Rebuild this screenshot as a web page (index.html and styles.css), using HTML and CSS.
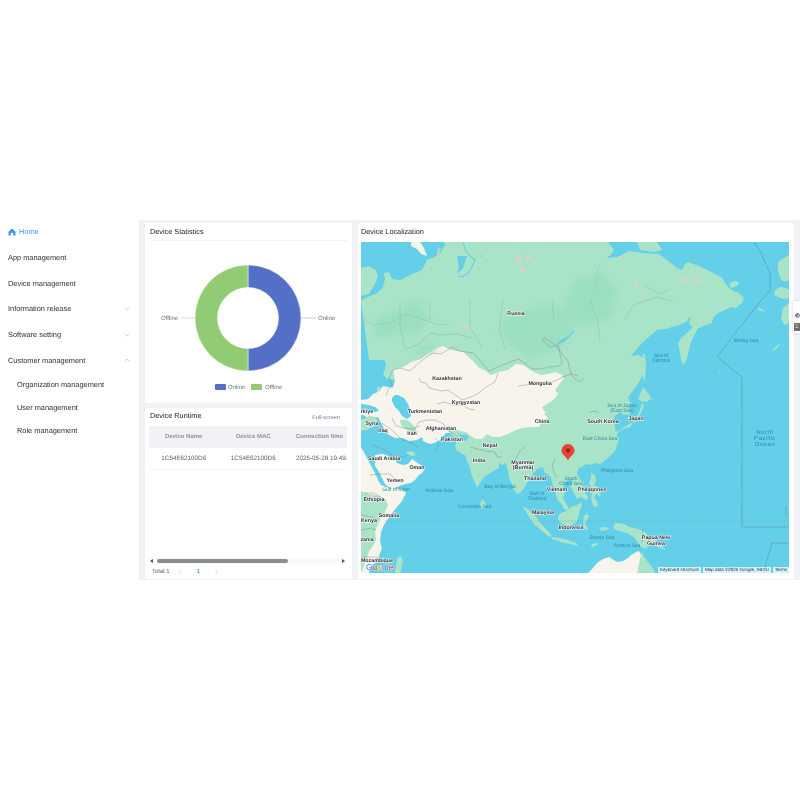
FILE: index.html
```html
<!DOCTYPE html>
<html lang="en">
<head>
<meta charset="utf-8">
<title>Device dashboard</title>
<link rel="stylesheet" href="styles.css">
</head>
<body>
<div class="app">
  <nav class="sidebar">
    <a class="nav-item active">
      <svg class="home-icon" viewBox="0 0 16 16"><path d="M8 1 1 7.500V15h4.500v-4.500c0-1.500 5-1.500 5 0V15H15V7.500z" fill="#3f93f5"/></svg>
      <span>Home</span>
    </a>
    <a class="nav-item">App management</a>
    <a class="nav-item">Device management</a>
    <a class="nav-item">Information release<svg class="caret" viewBox="0 0 8 5"><path d="M1 1l3 3 3-3"/></svg></a>
    <a class="nav-item">Software setting<svg class="caret" viewBox="0 0 8 5"><path d="M1 1l3 3 3-3"/></svg></a>
    <a class="nav-item">Customer management<svg class="caret" viewBox="0 0 8 5"><path d="M1 4l3-3 3 3"/></svg></a>
    <div class="sub-list">
      <a class="sub-item">Organization management</a>
      <a class="sub-item">User management</a>
      <a class="sub-item">Role management</a>
    </div>
  </nav>
  <main class="content">
    <div class="left-col">
      <section class="card stats">
        <h2 class="card-title ruled">Device Statistics</h2>
        <svg class="chart" viewBox="145 242 207 161">
          <path d="M248 265a53 53 0 0 1 0 106v-22.500a30.500 30.500 0 0 0 0-61z" fill="#5470c6" stroke="#fff" stroke-width=".5"/>
          <path d="M248 371a53 53 0 0 1 0-106v22.500a30.500 30.500 0 0 0 0 61z" fill="#91cc75" stroke="#fff" stroke-width=".5"/>
          <path d="M301.500 318H316" stroke="#c3cdeb" fill="none"/>
          <path d="M181 318h14" stroke="#d6edcb" fill="none"/>
          <text class="chart-label" x="318" y="320">Online</text>
          <text class="chart-label" x="161" y="320">Offline</text>
          <rect x="215" y="384" width="11" height="6" rx="1" fill="#5470c6"/>
          <text class="chart-label" x="228" y="389">Online</text>
          <rect x="251" y="384" width="11" height="6" rx="1" fill="#91cc75"/>
          <text class="chart-label" x="265" y="389">Offline</text>
        </svg>
      </section>
      <section class="card runtime">
        <div class="runtime-head">
          <h2 class="card-title">Device Runtime</h2>
          <span class="fullscreen">Full-screen</span>
        </div>
        <div class="table-wrap">
          <div class="t-row t-header">
            <div class="t-cell">Device Name</div>
            <div class="t-cell">Device MAC</div>
            <div class="t-cell">Connection time</div>
          </div>
          <div class="t-row t-body">
            <div class="t-cell">1C54E62100D6</div>
            <div class="t-cell">1C54E62100D6</div>
            <div class="t-cell">2025-05-28 19:49:1</div>
          </div>
        </div>
        <div class="scrollbar">
          <span class="arrow-left"></span>
          <span class="thumb"></span>
          <span class="arrow-right"></span>
        </div>
        <div class="pager">
          <span class="total">Total 1</span>
          <svg class="page-arrow" viewBox="0 0 5 8"><path d="M4 1 1 4l3 3"/></svg>
          <span class="page-num">1</span>
          <svg class="page-arrow" viewBox="0 0 5 8"><path d="M1 1l3 3-3 3"/></svg>
        </div>
      </section>
    </div>
    <section class="card local">
      <h2 class="card-title">Device Localization</h2>
      <div class="map">
        <svg class="map-svg" viewBox="361 242 428 331" preserveAspectRatio="none">
          <defs>
            <filter id="soft" x="-10%" y="-10%" width="120%" height="120%"><feGaussianBlur stdDeviation="2.500"/></filter>
            <filter id="tiny" x="-10%" y="-10%" width="120%" height="120%"><feGaussianBlur stdDeviation=".9"/></filter>
            <filter id="edge" x="-5%" y="-5%" width="110%" height="110%"><feGaussianBlur stdDeviation=".35"/></filter>
            <clipPath id="mapclip"><rect x="361" y="242" width="428" height="331"/></clipPath>
          </defs>
          <rect x="361" y="242" width="428" height="331" fill="#63cfe8"/>
          <g clip-path="url(#mapclip)">
            <g filter="url(#edge)">
              <!-- Eurasia: green base -->
              <path class="green" d="M361 300l7-3 9-4 6-6 2-8-1-6 5-1 3 7 8 1 10-5 12-5 5-10 8-3 6-5 4-7-2-5h10l3 12 3 14-2 8 6-6 3-10 4-6 2-4h120l8 3 7 2 1 5 9-1 12-6 15 2 15 1 8 6 9 7 6 3 3-6 3-2 8 3 12 5 14 8 6 9 5 4 6 2 5 5-2 5-6 5-5-1-6 3-7 3-5 5-1 5-6 2-7 3-4 1-4-3-2-3 2-7-5 6-7 3-7 2-6 2-9 1-6 5-8 7-7 8-5 6 8-1 4 3 2 7-2 9-5 10-7 9-3 5 3 5-2 5 1 6-6 1-4-3-5 4-2 5 2 5 1 8 3 5-2 6-2 6-6 6-6 5-3 2-5-1-4 2-5-1-3 2-4 2-2 5 1 3 3 5 3 1-1 4 2 7 4 4-3 3-5-3-4 2-2-4-3-6-2-3 3-5-3-2-5 3-2 5 2 5-2 6 5 9 1 4-5-2-3-6-3-2-2-6-2-7-2-5-1-6-7-5-1-6-3-3-5 9-6 7-4 8-4 5-3 2-4-3-2-7-3-6-1-7-2-7-2-4-4-3 1-3-7-1-7 1-5-3-3 3-2 5-5-2-3-3-1-5-1-3-5-1 4-4 3-4-2-1-1-2-4 1-5-2 1 3-3-2-9-4-5-1-3 3-1 4-5 3-8 2-1-2 2-3-7-2-4 4-2-3-3-9-1-5-3-8-5-5 0-1-4-3 1 6 4 10-3-5-1-2-5-6-2-5-6-3-2-3h-5v-9l8 1 8-1 6-4-6-3-7-2-3-4 2-5 1-6-2-3h-15z"/>
              <path class="green" d="M448 242H608l6 8-4 6H450zM637 242h20l5 8-8 2-14-2z"/>
              <!-- Africa & Arabia -->
              <path class="beige" d="M361 447l4 7 5 10 5 9 4 9 2 3 8 3 13 1 4 4-4 8-5 6-5 6-4 6-4 6-3 7-1 10 2 6-2 5-2 6-3 4-4 3-2 5 1 8h-12z"/>
              <path class="green" d="M361 491l7 3 11 2 6 3 3 6-3 7-4 6-4 8-2 6 1 8-3 6-4 5-2 7-6 15z"/>
              <path class="beige" d="M375 455l8-1 7 3 5 3 2 3 6 2 5-1 4-5 3 2 7 5 3 2-2 4-5 4-3 4-4 3-6 1-8 3-4 2-4-2-4-3-3-6-3-6-4-6z"/>
              <path class="green" d="M398 557l3-1 2 6-2 8-1 3h-5l1-8z"/>
              <!-- Islands -->
              <path class="green" d="M361 268l8-2 7 4 2 6-3 8-3 5-3 5-8 2z"/>
              <path class="beige" d="M411 242h9l4 6 3 8-6-2-4-5-6-3z"/>
              <path class="green" d="M655 400l-3-1-7 2-3-2zM643 353l2 2 1 12-1 10-1 6-1-6-1-9z"/>
              <path class="green" d="M678 343l3-5 6-5 6-6 5-3 2-4-2 8-4 8-3 6-2 8-2 8-2 5-2 2-2-5-1-8z"/>
              <path class="green" d="M643 387l5 6 3 5-4 4-6-1-3-2 3-7zM643 403l1 3-3 7-3 5-3 4-6 2-5 3-5 4-5 1-2 4 2 2 1 4-2 5-2-2v-5l1-4 5-2 3-3 3-2 7-2 3-4 3-6 3-4 2-7 1-2z"/>
              <path class="green" d="M587 455l2 1-1 4-2 3-1-2 1-3zM482 499l3 3 1 4-2 3-3-1-1-4zM558 468l3 1-1 3-3 1-1-3zM591 473l4 2 1 6-2 4 5 3-1 4 3 1-1 3-4-2-2 4 3 3 1 5-4 1-2-5-1-5 1-3-2-3 1-5-2-3 2-5z"/>
              <path class="green" d="M522 506l6 3 8 8 7 9 6 6 3 5-4-1-6-5-8-7-5-7-4-7zM552 537l8 1 8 2 8 3 2 3-8-2-9-2-9-3zM558 517l3-4 5-2 5-4 6-2 4-3 1 3-3 8-1 6-3 4-6 3-7-2-4-4zM584 516l3-2 2 2-2 4-2 4 3 4-2 3-2-3-1-6zM599 528l5-1 6 1-4 2-5 1zM615 523l9 1 5 3 9 2 7 3 4 5 6 4 8 6 3 3-6-2-4-3-4 0-4 1-2 3-5-2-3-4-3-5-6-4-9-3-7-2zM592 544l5-1 2 1-4 2-4 1z"/>
              <path class="green" d="M778 262l6-4 5-3v25l-5 2-4-4-2-8zM775 290l5-3 6 1 3 2v8l-5 1-6-2-4-2zM783 308l6-5v20l-5 2-3-7zM757 308l5 1 3 3-4-1-3-1zM772 350l6-5 3-1-4 4-4 3zM767 358l3-2-3 3zM719 372l2 1-2 1zM729 284l5-3 5 1-2 4-6 2z"/>
              <!-- Australia -->
              <path class="beige" d="M588 573l4-4 5-6 6-4 6-2 3 2 5 3 6-1 5-3 3-3 5-3 3-1 3 6 4 6 4 5 2 5z"/>
              <path class="green" d="M637 573l4-18 1-3 3 6 4 5 4 5 2 5z"/>
              <!-- Beige central Asia / Mongolia / China / Middle East -->
              <path class="beige" d="M361 400l7-1 5-5 7-3 3-5 10 2 2-8-2-10 10-3 8-5 10-3 6-5 10-6 6-2 8 4 12 2 10 9 5 6 6 3 7 5 8-3 9-2 8-6 7 1 6 4 5 3 7 3 7-1 7-2 8 3 2 3 8 1 2 8-2 7-1 5-5 4-6 1-4 2-5 2-8 6 4 4-6 3-3 6-9 0-8 1-6 2-8 4-8 3-7 0-6-3-5 5-6 0-5-3-5-4-6-1-4-2-5 1 0 3-5 0-7 8-8 3-4-1-4-2-1-4-5 3-8 1-6-3-8 0-6-3-4-4-4-8-3-6-4 1-1 4-4-3-4-3-5-2-6 1-9-2-7-3z"/>
              <path class="sea" d="M392 398l3-3 3 0 6 3 4 6 2 6 1 6-4 3-5-3-3-5-4-4-3-6zM361 404l8 1 6 2 4 3-3 2-8-1-7 0z"/>
              <path class="green" d="M361 420l8-4 7 1 2 5-5 5-6 3-6 1z"/>
              <path class="green" d="M400 420l8 0 6 6 3 6-6 0-6-3-4-4z"/>
              <!-- Green south asia -->
              <path class="green" d="M447 430l8 1 6 6 7 6 8 4 9 1 9 2 8-1 8 1-1 7-2 5-4 3-4-2 0 5-4 2-6 4-5 3-4 6-3 5-2-5-3-7-2-7-2-6-2-4 0-3-5-3-5-3-1-5 2-4-5-6z" />
              <path class="green" d="M505 440l10-2 11-4 8-2 10-2 9-1 12 1 7-3 9 0 4 4 2 7 0 6-2 4-5 3-4 2-7 3-6 1-7-2-3 3-2 4 2 5 3 5-1 3-4-3-3-3-4-2-4 1-2 1-4-1-3-5-2-6-2-5-2-6-4-2-5-1-4-2z"/>
              <path class="green" d="M561 376l14-4 8 1 3 6 1 8-2 10 3 9 2 3-6 2-3 6-6 2-7-3-9-2-4-2-4 2-6-2-3-5 5-3 5-3 3-3 3-4-3-4 3-4 6-8z"/>
              <path class="green" d="M406 452l4-1 4 1 2 3-4 1-4-1z"/>
              <!-- Texture -->
              <g class="tex" filter="url(#soft)">
                <path d="M375 320l25-12 18-8 12 18-12 14-22 2-20 4z"/>
                <path d="M500 322l40-18 20 3 14 22-12 20-30 6-20-8-12-12z"/>
                <path d="M575 280l28-8 14 18-6 28-30 10-20-16z"/>
                <path d="M410 348l20-4 10 6-16 6zM520 350l28-4 4 6-26 6z"/>
              </g>
              <g class="rock" filter="url(#tiny)">
                <path d="M514 258l5-3 2 6-4 4zM524 256l5-2 2 5-4 3zM519 268l5-3 2 5-4 4zM532 262l3-1 1 4-3 2zM460 327l4-3 3 2-2 4zM468 325l4 1-1 4-3 1z"/>
                <path d="M634 276l3 5 3 8-3-2-3-6zM679 275l6 3 4 4-4 1-5-3zM693 279l6 0 3 3-5 2zM640 290l4 4-1 3-3-3z"/>
              </g>
              <path class="rock-sharp" d="M605 270l2-3 3 2-2 4zM622 256l3 1-1 4-3-1zM436 257l2-10 3 1-2 8z"/>
            </g>
            <!-- Water -->
            <path class="river" d="M463 243l3 8 5 6 4 3-3 7-4 6-6 4-4-1"/>
            <path class="river-thin" d="M479 252l4 6 5 4M600 264l-3 8-1 10 3 8"/>
            <path class="lake" d="M556 345l8-3 5-5 4-4 2-3-3 2-5 5-6 3z"/>
            <!-- Borders -->
            <path class="border" d="M393 370l7-2 10 3 10-9 12-9 9 1 11-7 8 4 13 2 9 10 7 8 9-4 12-5 9-3 8 6 6 4 8 0 8-2 10-1 3-3-2-9-2-9-8 2-8-7 3-2 6 4 6 5 6 8 5 6 1 6 3 9 3 3 5 3 4-4"/>
            <path class="border" d="M518 386l8-1 10-3 13 1 8-3 6-3 8-3 7 2M498 373l-3 9-9 5-7 6-8 4-9 3-5-4-9-6-6 1-4-1-9-2-3-5-5-1-2-4M393 370l-4 8 3 7-4 5-2 6"/>
            <path class="border-light" d="M361 320l14 5 15-2 15-9 20 6 11 4 14 1M405 350l16-7 9-10 10 2 18-1 14 4M400 302v24l5 23M430 302v18M470 300v27l12 20M503 301l-4 28 6 20M552 300l2 20M590 300l8 22 2 20M625 320l8-15 24-8 16 4M644 285l15 9 10-5"/>
            <path class="border" d="M371 422l12 2 9 6 5 5 5 5 7 2 8 4 1 3M392 418l4 8 8 2 8 1 8-3M414 430l5-8 8-2 8 0 9 4 2 5 6 4 6 4M437 404l7-2 10 3 9 0 6 4 6 1M435 438l4 5-2 6-2 3M373 445l10 4 9 6 11 2 6-2M370 475l10-1 10 0 5 5M365 493l8 0 6 3 7 5M361 515l10 2 6 3M361 530l10-2 5 2M362 557l15 0 2 8M525 447l-6 5-4 9 1 6M530 465l3 7 3 4 5 0 4 6M555 459l-3 7 2 6 3 6M470 447l15 4 10 1 2 5 5 0M643 528l-1 15M589 412l7-1 3 2"/>
            <!-- Dashed lines -->
            <path class="dash" d="M755 243l8 14 7 16v17l-27 33-26 34 25 20v150h47M763 573l7-23 2-7h17M786 506v11"/>
            <path class="dash-light" d="M385 521h404"/>
            <!-- Pin -->
            <path d="M568 444a6.500 6.500 0 0 0-6.500 6.500c0 4 4.500 5.500 6.500 10 2-4.500 6.500-6 6.500-10a6.500 6.500 0 0 0-6.500-6.500z" fill="#ea4335"/>
            <circle cx="568" cy="450.500" r="2.200" fill="#a5221a"/>
            <!-- Land labels -->
            <g class="lbl">
              <text x="516" y="315">Russia</text>
              <text x="447" y="380">Kazakhstan</text>
              <text x="540" y="385">Mongolia</text>
              <text x="466" y="404">Kyrgyzstan</text>
              <text x="425" y="413">Turkmenistan</text>
              <text x="441" y="430">Afghanistan</text>
              <text x="412" y="435">Iran</text>
              <text x="383" y="432">Iraq</text>
              <text x="372" y="425">Syria</text>
              <text x="367" y="413">rkiye</text>
              <text x="452" y="441">Pakistan</text>
              <text x="490" y="447">Nepal</text>
              <text x="542" y="423">China</text>
              <text x="479" y="462">India</text>
              <text x="523" y="464">Myanmar</text>
              <text x="523" y="469">(Burma)</text>
              <text x="535" y="480">Thailand</text>
              <text x="557" y="491">Vietnam</text>
              <text x="543" y="514">Malaysia</text>
              <text x="571" y="529">Indonesia</text>
              <text x="592" y="491">Philippines</text>
              <text x="603" y="423">South Korea</text>
              <text x="636" y="420">Japan</text>
              <text x="384" y="460">Saudi Arabia</text>
              <text x="417" y="469">Oman</text>
              <text x="395" y="482">Yemen</text>
              <text x="374" y="501">Ethiopia</text>
              <text x="389" y="517">Somalia</text>
              <text x="369" y="522">Kenya</text>
              <text x="367" y="541">zania</text>
              <text x="377" y="561.500">Mozambique</text>
              <text x="656" y="539">Papua New</text>
              <text x="656" y="545">Guinea</text>
            </g>
            <g class="sea-lbl">
              <text x="661" y="357">Sea of</text>
              <text x="661" y="362">Okhotsk</text>
              <text x="746" y="342">Bering Sea</text>
              <text x="622" y="407">Sea of Japan</text>
              <text x="622" y="412">(East Sea)</text>
              <text x="600" y="440">East China Sea</text>
              <text x="617" y="472">Philippine Sea</text>
              <text x="571" y="480">South</text>
              <text x="571" y="485">China Sea</text>
              <text x="439" y="491.500">Arabian Sea</text>
              <text x="500" y="488">Bay of Bengal</text>
              <text x="475" y="507.500">Laccadive Sea</text>
              <text x="396" y="490.500">Gulf of Aden</text>
              <text x="537" y="495">Gulf of</text>
              <text x="537" y="500">Thailand</text>
              <text x="602" y="539">Banda Sea</text>
              <text x="627" y="547">Arafura Sea</text>
            </g>
            <g class="ocean-lbl">
              <text x="765" y="434">North</text>
              <text x="765" y="440">Pacific</text>
              <text x="765" y="446">Ocean</text>
            </g>
            <text class="g-logo" x="366" y="570"><tspan fill="#4285f4">G</tspan><tspan fill="#ea4335">o</tspan><tspan fill="#fbbc05">o</tspan><tspan fill="#4285f4">g</tspan><tspan fill="#34a853">l</tspan><tspan fill="#ea4335">e</tspan></text>
          </g>
        </svg>
        <div class="attribution">
          <span>Keyboard shortcuts</span>
          <span>Map data ©2025 Google, INEGI</span>
          <span>Terms</span>
        </div>
      </div>
    </section>
  </main>
</div>
<aside class="floating">
  <svg class="float-icon" viewBox="0 0 8 8"><circle cx="4" cy="4" r="3" fill="#fff" stroke="#2b4fa8" stroke-width="1.500"/><path d="M4 1v3H1" stroke="#d8342c" stroke-width="1.500" fill="none"/></svg>
  <span class="float-tag">1</span>
</aside>
</body>
</html>
```

FILE: styles.css
```css
* { box-sizing: border-box; }
html, body { margin: 0; padding: 0; background: #fff; }
body {
  width: 800px;
  height: 800px;
  overflow: hidden;
  padding-top: 220px;
  position: relative;
  font-family: "Liberation Sans", Arial, sans-serif;
  color: #303133;
  text-rendering: geometricPrecision;
}
.app { display: flex; height: 360px; filter: blur(.3px); }

/* Sidebar */
.sidebar { width: 139px; flex: none; background: #fff; }
.nav-item {
  height: 25.700px;
  padding: 0 9px 0 8px;
  display: flex;
  align-items: center;
  justify-content: space-between;
  font-size: 7.400px;
  color: #303133;
}
.nav-item.active { justify-content: flex-start; gap: 3px; color: #409eff; height: 23px; margin-bottom: 1.700px; }
.home-icon { width: 8px; height: 8px; }
.caret { width: 6px; height: 4px; fill: none; stroke: #aeb2b8; stroke-width: .8; }
.sub-item {
  display: flex;
  align-items: center;
  height: 23px;
  padding-left: 17px;
  font-size: 7.400px;
  color: #303133;
}

/* Layout */
.content {
  flex: 1;
  display: flex;
  gap: 6px;
  background: #f0f2f5;
  padding: 3px 6px 1px;
  min-width: 0;
}
.left-col { width: 207px; flex: none; display: flex; flex-direction: column; gap: 5px; }
.card { background: #fff; min-width: 0; }
.card-title { margin: 0; font-size: 7.300px; font-weight: 400; color: #1b1b1f; line-height: 12px; }

/* Device statistics */
.stats { height: 180px; padding-top: 3px; display: flex; flex-direction: column; }
.stats .card-title { margin: 0 5px; height: 15px; border-bottom: 1px solid #f2f3f5; }
.chart { display: block; width: 207px; height: 161px; flex: none; margin-top: 1px; }
.chart-label { font-size: 6px; fill: #6e7079; }

/* Runtime */
.runtime { flex: 1; padding: 2px 5px 0 4px; display: flex; flex-direction: column; min-height: 0; }
.runtime-head { display: flex; justify-content: space-between; align-items: flex-start; height: 16px; padding-left: 1px; }
.fullscreen { font-size: 5.600px; color: #7b7f87; padding: 3px 7px 0 0; line-height: 10px; }
.table-wrap { flex: 1; overflow: hidden; min-height: 0; }
.t-row { display: flex; width: 198px; align-items: center; }
.t-cell { width: 69.500px; flex: none; text-align: center; white-space: nowrap; }
.t-cell:last-child { width: 59px; text-align: left; padding-left: 8px; overflow: hidden; }
.t-header { height: 22px; background: #f0f2f5; color: #909399; font-weight: 700; font-size: 6px; }
.t-body { height: 21.500px; border-bottom: 1px solid #f2f3f5; color: #606266; font-size: 6.300px; }
.scrollbar { height: 6px; display: flex; align-items: center; background: #fafafa; flex: none; }
.thumb { display: block; margin-left: 8px; width: 131px; height: 4px; border-radius: 2px; background: #8c8c8c; }
.arrow-left, .arrow-right { width: 0; height: 0; border-top: 2px solid transparent; border-bottom: 2px solid transparent; }
.arrow-left { border-right: 3px solid #555; margin-left: 1px; margin-right: -4px; }
.arrow-right { border-left: 3px solid #555; margin-left: auto; margin-right: 2px; }
.pager { height: 15px; display: flex; align-items: center; padding-left: 3px; font-size: 6px; color: #606266; flex: none; }
.total { width: 27px; }
.page-arrow { width: 3px; height: 5px; fill: none; stroke: #a8abb2; stroke-width: .8; }
.page-num { width: 33px; text-align: center; color: #409eff; font-weight: 700; }

/* Localization */
.local { flex: 1; padding: 3px 5px 6px 3px; display: flex; flex-direction: column; }
.local .card-title { height: 16px; flex: none; }
.map { flex: 1; position: relative; overflow: hidden; min-height: 0; }
.map-svg { display: block; width: 100%; height: 100%; }
.green { fill: #a9e3c8; }
.beige { fill: #f7f4ec; }
.sea { fill: #63cfe8; }
.tex { fill: #90dbb9; opacity: .5; }
.rock { fill: #d6d4cd; opacity: .85; }
.rock-sharp { fill: #cfd2ca; opacity: .7; }
.river { fill: none; stroke: #63cfe8; stroke-width: 1.100; }
.river-thin { fill: none; stroke: #7ad3d8; stroke-width: .5; }
.lake { fill: #63cfe8; }
.border { fill: none; stroke: #7f8a85; stroke-width: .45; }
.border-light { fill: none; stroke: #86b7a3; stroke-width: .4; }
.dash { fill: none; stroke: #55808c; stroke-width: .7; stroke-dasharray: 1.500 1; }
.dash-light { fill: none; stroke: #7cb4c4; stroke-width: .6; stroke-dasharray: 2 1; }
.lbl text {
  font-size: 5.300px;
  font-weight: 700;
  text-anchor: middle;
  fill: #2d2f33;
  stroke: #fff;
  stroke-width: 1px;
  paint-order: stroke;
}
.sea-lbl text { font-size: 5px; text-anchor: middle; fill: #2f8aa3; }
.ocean-lbl text { font-size: 6px; letter-spacing: .6px; text-anchor: middle; fill: #2f8aa3; }
.g-logo { font-size: 8.500px; stroke: #fff; stroke-width: .5px; paint-order: stroke; }
.attribution {
  position: absolute;
  right: 0;
  bottom: 0;
  display: flex;
  gap: 2px;
  height: 6px;
  font-size: 4.500px;
  line-height: 6px;
  color: #333;
}
.attribution span { background: rgba(255, 255, 255, .72); padding: 0 2px; white-space: nowrap; }

/* Floating widget */
.floating {
  position: absolute;
  left: 793px;
  top: 301px;
  width: 7px;
  height: 32px;
  background: #fff;
  box-shadow: 0 0 3px rgba(0, 0, 0, .2);
  padding: 11px 0 0 2px;
}
.float-icon { display: block; width: 5px; height: 7px; }
.float-tag {
  display: block;
  margin-top: 4px;
  margin-left: -1px;
  height: 8px;
  width: 8px;
  background: #6f6f6f;
  color: #ddd;
  font-size: 6px;
  line-height: 8px;
  padding-left: 1px;
}
```
